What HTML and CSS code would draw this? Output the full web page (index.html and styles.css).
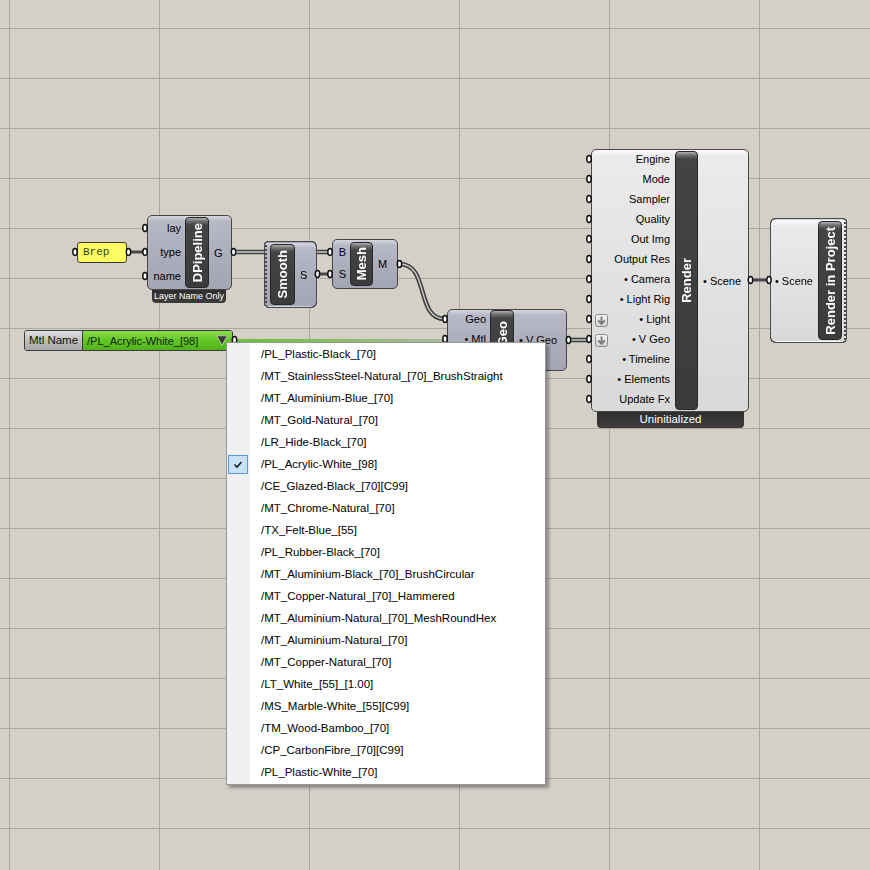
FILE: index.html
```html
<!DOCTYPE html>
<html>
<head>
<meta charset="utf-8">
<title>Grasshopper canvas</title>
<link rel="stylesheet" href="styles.css">
</head>
<body>
<div class="canvas">
  <svg class="wires" width="870" height="870" viewBox="0 0 870 870">
    <defs>
      <linearGradient id="gw" x1="234" y1="0" x2="447" y2="0" gradientUnits="userSpaceOnUse">
        <stop offset="0" stop-color="#6ac233"/>
        <stop offset="1" stop-color="#a9b89e"/>
      </linearGradient>
    </defs>
    <path class="w-solid" d="M128.5 252 H145"/>
    <path class="w-out" d="M233.5 252 H330"/><path class="w-in" d="M233.5 252 H330"/>
    <path class="w-solid" d="M317.5 274 H330"/>
    <path class="w-out" d="M399.5 264 C430 264 415 319 445 319"/><path class="w-in" d="M399.5 264 C430 264 415 319 445 319"/>
    <path class="w-green" d="M234.5 341 H445"/>
    <path class="w-out" d="M568.5 340 H589"/><path class="w-in" d="M568.5 340 H589"/>
    <path class="w-solid" d="M750.5 280 H769"/>
  </svg>

  <div class="panel">Brep</div>

  <div class="node lav n-dpipe">
    <div class="body">
      <div class="ins"><span>lay</span><span>type</span><span>name</span></div>
      <div class="bar"><span>DPipeline</span></div>
      <div class="outs"><span>G</span></div>
    </div>
    <div class="status">Layer Name Only</div>
  </div>

  <div class="node lav zig n-smooth">
    <div class="body">
      <div class="ins"></div>
      <div class="bar"><span>Smooth</span></div>
      <div class="outs"><span>S</span></div>
    </div>
  </div>

  <div class="node lav n-mesh">
    <div class="body">
      <div class="ins"><span>B</span><span>S</span></div>
      <div class="bar"><span>Mesh</span></div>
      <div class="outs"><span>M</span></div>
    </div>
  </div>

  <div class="node lav n-geo">
    <div class="body">
      <div class="ins"><span>Geo</span><span>• Mtl</span><span>• Lay</span></div>
      <div class="bar"><span>V Geo</span></div>
      <div class="outs"><span>• V Geo</span></div>
    </div>
  </div>

  <div class="node light n-render">
    <div class="body">
      <div class="ins">
        <span>Engine</span><span>Mode</span><span>Sampler</span><span>Quality</span><span>Out Img</span><span>Output Res</span><span>• Camera</span><span>• Light Rig</span><span>• Light</span><span>• V Geo</span><span>• Timeline</span><span>• Elements</span><span>Update Fx</span>
      </div>
      <div class="bar"><span>Render</span></div>
      <div class="outs"><span>• Scene</span></div>
    </div>
    <div class="status">Uninitialized</div>
  </div>

  <div class="node light zig n-rip">
    <div class="body">
      <div class="ins"><span>• Scene</span></div>
      <div class="bar"><span>Render in Project</span></div>
      <div class="outs"></div>
    </div>
  </div>

  <div class="vlist">
    <div class="vl-name">Mtl Name</div>
    <div class="vl-value">
      <span>/PL_Acrylic-White_[98]</span>
      <svg class="vl-arrow" width="12" height="11" viewBox="0 0 12 11"><polygon points="0.8,0.8 11.2,0.8 6,10.2" fill="#2e2e2e" stroke="#b9c4b0" stroke-width="1"/><polygon points="3,2.3 9,2.3 6,7.6" fill="#3c3c3c"/></svg>
    </div>
  </div>

  <svg class="grips" width="870" height="870" viewBox="0 0 870 870">
    <defs>
      <linearGradient id="ab" x1="0" y1="0" x2="0" y2="1">
        <stop offset="0" stop-color="#f7f7f7"/>
        <stop offset="1" stop-color="#cfcfcf"/>
      </linearGradient>
    </defs>
    <g class="grip">
      <ellipse cx="75" cy="252"/><ellipse cx="128.5" cy="252"/>
      <ellipse cx="145" cy="228"/><ellipse cx="145" cy="252"/><ellipse cx="145" cy="276"/><ellipse cx="233.5" cy="252"/>
      <ellipse cx="317.5" cy="274"/>
      <ellipse cx="330" cy="252"/><ellipse cx="330" cy="274"/><ellipse cx="399.5" cy="264"/>
      <ellipse cx="445" cy="319"/><ellipse cx="445" cy="339"/><ellipse cx="445" cy="359"/><ellipse cx="568.5" cy="340"/>
      <ellipse cx="589" cy="159"/><ellipse cx="589" cy="179"/><ellipse cx="589" cy="199"/><ellipse cx="589" cy="219"/><ellipse cx="589" cy="239"/><ellipse cx="589" cy="259"/><ellipse cx="589" cy="279"/><ellipse cx="589" cy="299"/><ellipse cx="589" cy="319"/><ellipse cx="589" cy="339"/><ellipse cx="589" cy="359"/><ellipse cx="589" cy="379"/><ellipse cx="589" cy="399"/>
      <ellipse cx="750.5" cy="280"/>
      <ellipse cx="769" cy="280"/>
      <ellipse cx="234.5" cy="340"/>
    </g>
    <g class="abox" transform="translate(595 314)">
      <rect x="0.5" y="0.5" width="12" height="12" rx="2"/>
      <path d="M6.5 2.5 V9.5 M3.2 6.4 L6.5 9.8 L9.8 6.4"/>
    </g>
    <g class="abox" transform="translate(595 334)">
      <rect x="0.5" y="0.5" width="12" height="12" rx="2"/>
      <path d="M6.5 2.5 V9.5 M3.2 6.4 L6.5 9.8 L9.8 6.4"/>
    </g>
  </svg>

  <ul class="menu">
    <li>/PL_Plastic-Black_[70]</li>
    <li>/MT_StainlessSteel-Natural_[70]_BrushStraight</li>
    <li>/MT_Aluminium-Blue_[70]</li>
    <li>/MT_Gold-Natural_[70]</li>
    <li>/LR_Hide-Black_[70]</li>
    <li class="checked"><span class="check"><svg width="18" height="17" viewBox="0 0 18 17"><polyline points="5.5,8.5 8,11 12.5,6" fill="none" stroke="#1e1e1e" stroke-width="1.6"/></svg></span>/PL_Acrylic-White_[98]</li>
    <li>/CE_Glazed-Black_[70][C99]</li>
    <li>/MT_Chrome-Natural_[70]</li>
    <li>/TX_Felt-Blue_[55]</li>
    <li>/PL_Rubber-Black_[70]</li>
    <li>/MT_Aluminium-Black_[70]_BrushCircular</li>
    <li>/MT_Copper-Natural_[70]_Hammered</li>
    <li>/MT_Aluminium-Natural_[70]_MeshRoundHex</li>
    <li>/MT_Aluminium-Natural_[70]</li>
    <li>/MT_Copper-Natural_[70]</li>
    <li>/LT_White_[55]_[1.00]</li>
    <li>/MS_Marble-White_[55][C99]</li>
    <li>/TM_Wood-Bamboo_[70]</li>
    <li>/CP_CarbonFibre_[70][C99]</li>
    <li>/PL_Plastic-White_[70]</li>
  </ul>
</div>
</body>
</html>
```

FILE: styles.css
```css
* { box-sizing: border-box; }
html, body { margin: 0; padding: 0; }
body {
  width: 870px;
  height: 870px;
  overflow: hidden;
  font-family: "Liberation Sans", Arial, sans-serif;
}

.canvas {
  position: relative;
  width: 870px;
  height: 870px;
  background-color: #d4d0c8;
  background-image:
    linear-gradient(to right, #aba79f 1px, transparent 1px),
    linear-gradient(to bottom, #aba79f 1px, transparent 1px);
  background-size: 150px 100%, 100% 50px;
  background-position: 9px 0, 0 28px;
}

/* wires & grips */
.wires, .grips {
  position: absolute;
  left: 0;
  top: 0;
  pointer-events: none;
}
.wires { z-index: 1; }
.grips { z-index: 3; }
.w-solid { fill: none; stroke: #4a4a4a; stroke-width: 3; }
.w-out { fill: none; stroke: #3f3f3f; stroke-width: 4.6; }
.w-in { fill: none; stroke: #cfcfcf; stroke-width: 1.4; }
.w-green { fill: none; stroke: url(#gw); stroke-width: 4; }
.grip ellipse { rx: 2.2px; ry: 3.4px; fill: #fff; stroke: #111; stroke-width: 1.5; }
.abox rect { fill: url(#ab); stroke: #8c8c8c; stroke-width: 1; }
.abox path { fill: none; stroke: #7b7b7b; stroke-width: 1.9; }

/* panel */
.panel {
  position: absolute;
  z-index: 2;
  left: 77px;
  top: 242px;
  width: 50px;
  height: 21px;
  padding-left: 5px;
  background: #fffb62;
  border: 1px solid #3a3a3a;
  border-radius: 3px;
  font-family: "Liberation Mono", "Courier New", monospace;
  font-size: 11px;
  line-height: 19px;
  color: #2e4c14;
}

/* generic component */
.node { position: absolute; z-index: 2; }
.body {
  display: flex;
  border: 1px solid #464646;
  border-radius: 5px;
  padding: 1px 0;
}
.lav .body {
  background: linear-gradient(to bottom, #d5d6df 0, #b8b9c7 5px, #acadbb 55%, #a4a5b3 100%);
}
.light .body {
  background: linear-gradient(to bottom, #fcfcfc 0, #ebebeb 6px, #e1e1e1 55%, #d9d9d9 100%);
}
.ins {
  flex: none;
  text-align: right;
  padding-right: 4px;
  font-size: 11px;
  color: #000;
}
.ins span { display: block; white-space: nowrap; }
.outs {
  flex: 1;
  display: flex;
  flex-direction: column;
  justify-content: center;
  padding-left: 5px;
  font-size: 11px;
  color: #000;
  white-space: nowrap;
}
.bar {
  flex: none;
  display: flex;
  align-items: center;
  justify-content: center;
  border: 1px solid #262626;
  border-radius: 4px;
  background: linear-gradient(to bottom, #b0b0b0 0, #727272 3px, #444 7px, #3b3b3b 100%);
  overflow: hidden;
}
.bar span {
  writing-mode: vertical-rl;
  transform: rotate(180deg);
  white-space: nowrap;
  color: #fff;
  font-weight: bold;
  font-size: 13px;
  line-height: 15px;
}
.status {
  background: linear-gradient(to bottom, #2e2e2e, #3d3d3d);
  color: #fff;
  text-align: center;
  border-radius: 0 0 4px 4px;
  white-space: nowrap;
}

/* zig-zag edged components */
.zig {
  filter: drop-shadow(1px 0 0 #4a4a4a) drop-shadow(-1px 0 0 #4a4a4a) drop-shadow(0 1px 0 #4a4a4a) drop-shadow(0 -1px 0 #4a4a4a);
}
.zig .body { border-color: transparent; }

/* DPipeline */
.n-dpipe { left: 147px; top: 215px; }
.n-dpipe .body { width: 85px; height: 75px; }
.n-dpipe .ins { width: 37px; margin-top: -1px; }
.n-dpipe .ins span { height: 24px; line-height: 24px; }
.n-dpipe .bar { width: 24px; }
.n-dpipe .status { margin-left: 5px; width: 74px; height: 13px; font-size: 9px; line-height: 12px; }

/* Smooth */
.n-smooth { left: 264px; top: 242px; }
.n-smooth .body {
  width: 52px;
  height: 65px;
  -webkit-mask: linear-gradient(#000 0 0) 4px 0 / calc(100% - 4px) 100% no-repeat,
                conic-gradient(from 60deg at left, #000 60deg, #0000 0) 0 0 / 4px 4px repeat-y;
  mask: linear-gradient(#000 0 0) 4px 0 / calc(100% - 4px) 100% no-repeat,
        conic-gradient(from 60deg at left, #000 60deg, #0000 0) 0 0 / 4px 4px repeat-y;
}
.n-smooth .ins { width: 5px; padding: 0; }
.n-smooth .bar { width: 25px; }

/* Mesh */
.n-mesh { left: 332px; top: 239px; }
.n-mesh .body { width: 66px; height: 50px; padding: 2px 0; }
.n-mesh .ins { width: 17px; margin-top: -1px; }
.n-mesh .ins span { height: 22px; line-height: 22px; }
.n-mesh .bar { width: 23px; }

/* Geo */
.n-geo { left: 447px; top: 309px; }
.n-geo .body { width: 120px; height: 62px; padding: 0; }
.n-geo .ins { width: 42px; margin-top: -1px; }
.n-geo .ins span { height: 20px; line-height: 20px; }
.n-geo .bar { width: 24px; }

/* Render */
.n-render { left: 591px; top: 149px; }
.n-render .body { width: 158px; height: 263px; }
.n-render .ins { width: 83px; padding-right: 5px; margin-top: -2px; }
.n-render .ins span { height: 20px; line-height: 20px; }
.n-render .bar { width: 23px; }
.n-render .status { margin-left: 6px; width: 147px; height: 16px; font-size: 11.5px; line-height: 15px; }

/* Render in Project */
.n-rip { left: 771px; top: 219px; }
.n-rip .body {
  width: 76px;
  height: 123px;
  -webkit-mask: linear-gradient(#000 0 0) 0 0 / calc(100% - 4px) 100% no-repeat,
                conic-gradient(from 240deg at right, #000 60deg, #0000 0) 100% 0 / 4px 4px repeat-y;
  mask: linear-gradient(#000 0 0) 0 0 / calc(100% - 4px) 100% no-repeat,
        conic-gradient(from 240deg at right, #000 60deg, #0000 0) 100% 0 / 4px 4px repeat-y;
}
.n-rip .ins { width: 46px; padding-right: 5px; display: flex; flex-direction: column; justify-content: center; }
.n-rip .bar { width: 24px; }
.n-rip .outs { padding: 0; }

/* value list */
.vlist {
  position: absolute;
  z-index: 2;
  left: 24px;
  top: 330px;
  width: 209px;
  height: 21px;
  display: flex;
  border: 1px solid #3b3b3b;
  border-radius: 3px;
  overflow: hidden;
  font-size: 11px;
}
.vl-name {
  flex: none;
  width: 58px;
  border-right: 1px solid #3b3b3b;
  background: linear-gradient(to bottom, #e0e0e0, #b8b8b8 60%, #aaaaaa);
  color: #111;
  text-align: center;
  font-size: 11.5px;
  line-height: 19px;
  white-space: nowrap;
}
.vl-value {
  flex: 1;
  display: flex;
  align-items: center;
  justify-content: space-between;
  padding: 0 4px 0 4px;
  background: linear-gradient(to bottom, #88de4a, #63c627 50%, #4fb319);
  color: #13240a;
  white-space: nowrap;
}
.vl-arrow { flex: none; display: block; }

/* dropdown */
.menu {
  position: absolute;
  z-index: 5;
  left: 226px;
  top: 342px;
  width: 320px;
  margin: 0;
  padding: 0 0 1px 0;
  list-style: none;
  background: linear-gradient(to right, #f0f0f0 0, #f0f0f0 23px, #ffffff 23px);
  border: 1px solid #979797;
  box-shadow: 3px 3px 3px rgba(0, 0, 0, 0.33);
  font-size: 11.5px;
  color: #000;
}
.menu li {
  position: relative;
  height: 22px;
  line-height: 23px;
  padding-left: 34px;
  white-space: nowrap;
}
.check {
  position: absolute;
  left: 1px;
  top: 2px;
  width: 20px;
  height: 19px;
  background: #c6e1f8;
  border: 1px solid #5b9ad6;
}
.check svg { display: block; }
```
